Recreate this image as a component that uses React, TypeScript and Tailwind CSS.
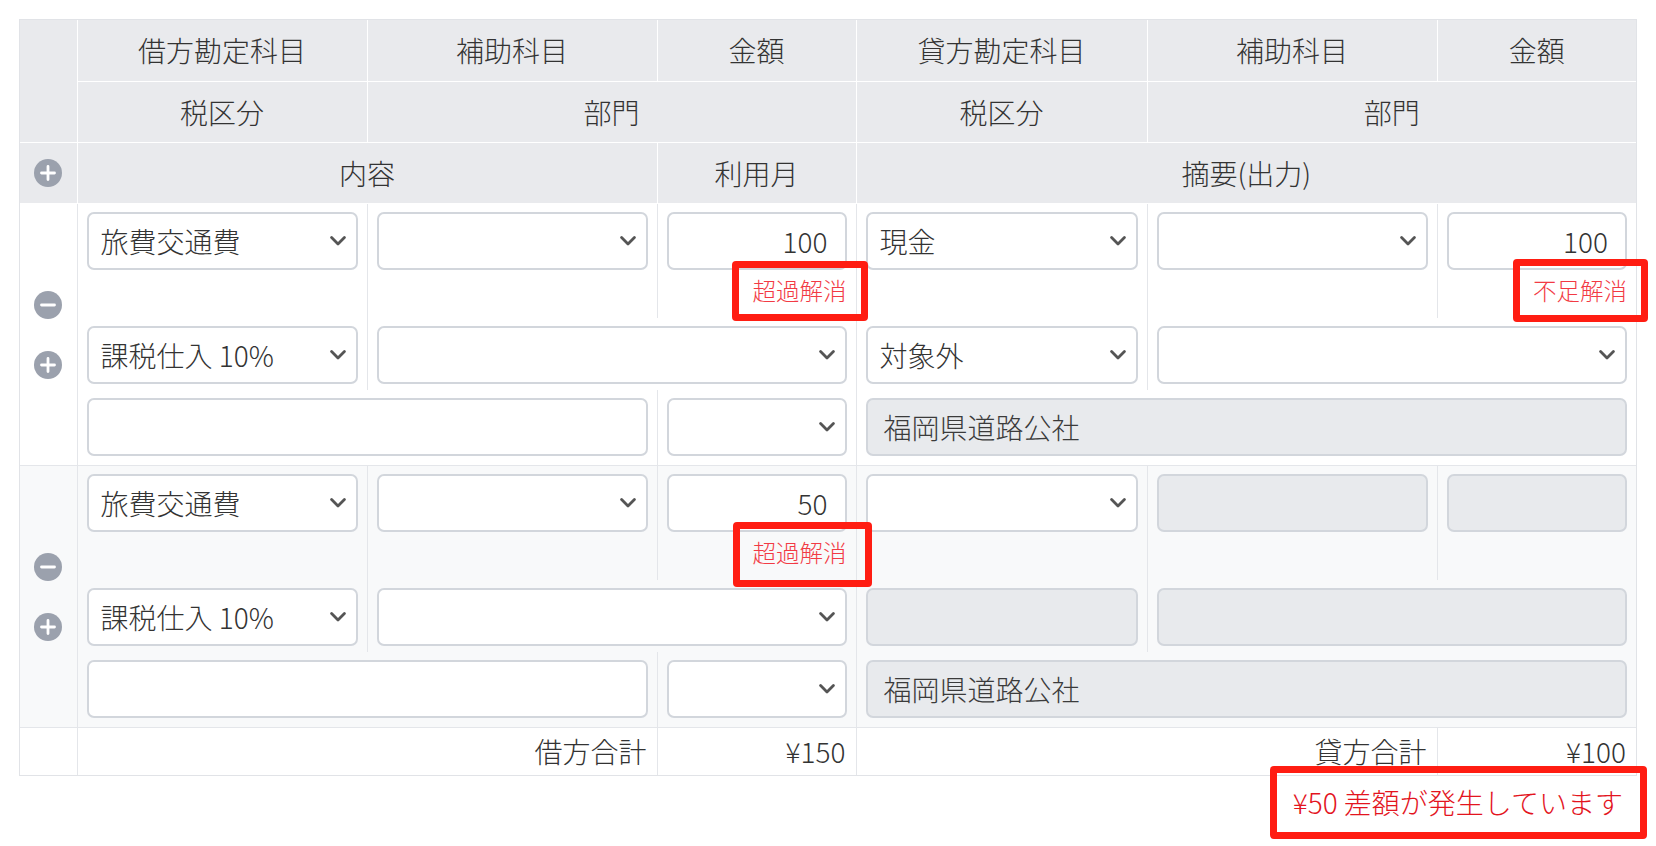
import React from 'react';

type Kind = 'select' | 'input' | 'disabled';

interface FieldProps {
  kind?: Kind;
  value?: string;
  align?: 'left' | 'right';
}

function Chevron() {
  return (
    <svg width="16" height="10" viewBox="0 0 16 10" className="shrink-0">
      <path d="M1.6 1.6 L8 8 L14.4 1.6" fill="none" stroke="#555" strokeWidth="2.8" strokeLinecap="round" strokeLinejoin="round" />
    </svg>
  );
}

function Field({ kind = 'select', value = '', align = 'left' }: FieldProps) {
  if (kind === 'disabled') {
    return (
      <div className="flex h-[58px] w-full items-center rounded-[7px] border-2 border-[#d2d6dc] bg-[#e8eaed] pl-[16px] text-[28px] leading-none text-[#3b3b3b]">
        {value}
      </div>
    );
  }
  if (kind === 'input') {
    return (
      <div
        className={
          align === 'right'
            ? 'flex h-[58px] w-full items-center justify-end rounded-[7px] border-2 border-[#d2d6dc] bg-white pr-[17px] text-[28px] leading-none text-[#333]'
            : 'flex h-[58px] w-full items-center rounded-[7px] border-2 border-[#d2d6dc] bg-white pl-[12px] text-[28px] leading-none text-[#333]'
        }
      >
        {value}
      </div>
    );
  }
  return (
    <div className="flex h-[58px] w-full items-center justify-between rounded-[7px] border-2 border-[#d2d6dc] bg-white pl-[12px] pr-[10px] text-[28px] leading-none text-[#333]">
      <span className="whitespace-nowrap">{value}</span>
      <Chevron />
    </div>
  );
}

function RoundIcon({ type }: { type: 'plus' | 'minus' }) {
  return (
    <span className="flex h-[28px] w-[28px] items-center justify-center rounded-full bg-[#9ba1ad]">
      <svg width="16" height="16" viewBox="0 0 16 16">
        <path d={type === 'plus' ? 'M8 1.5v13M1.5 8h13' : 'M1.5 8h13'} stroke="#fff" strokeWidth="2.8" strokeLinecap="round" />
      </svg>
    </span>
  );
}

// hand-drawn red annotation boxes from the screenshot
function Mark({ className }: { className: string }) {
  return <span className={'pointer-events-none absolute rounded-[4px] border-[7px] border-[#ff1d12] ' + className} />;
}

interface Entry {
  debit: string;
  debitAmount: string;
  debitNote: string;
  debitMark: string;
  credit: Kind;
  creditValue: string;
  creditSub: Kind;
  creditAmount: Kind;
  creditAmountValue: string;
  creditNote?: string;
  creditMark?: string;
  creditTax: Kind;
  creditTaxValue: string;
  creditDept: Kind;
  summary: string;
  striped: boolean;
}

const entries: Entry[] = [
  {
    debit: '旅費交通費',
    debitAmount: '100',
    debitNote: '超過解消',
    debitMark: 'left-[65px] -top-[12px] w-[136px] h-[60px]',
    credit: 'select',
    creditValue: '現金',
    creditSub: 'select',
    creditAmount: 'input',
    creditAmountValue: '100',
    creditNote: '不足解消',
    creditMark: 'left-[66px] -top-[14px] w-[135px] h-[63px]',
    creditTax: 'select',
    creditTaxValue: '対象外',
    creditDept: 'select',
    summary: '福岡県道路公社',
    striped: false,
  },
  {
    debit: '旅費交通費',
    debitAmount: '50',
    debitNote: '超過解消',
    debitMark: 'left-[66px] -top-[13px] w-[139px] h-[65px]',
    credit: 'select',
    creditValue: '',
    creditSub: 'disabled',
    creditAmount: 'disabled',
    creditAmountValue: '',
    creditTax: 'disabled',
    creditTaxValue: '',
    creditDept: 'disabled',
    summary: '福岡県道路公社',
    striped: true,
  },
];

const th = 'h-[61px] border border-white text-center align-middle text-[28px] font-light text-[#333]';
const rowA = 'border-x border-t border-[#e4e6ea] px-[9px] pt-[8px] pb-[11px] align-top';
const rowB = 'border-x border-[#e4e6ea] px-[9px] pt-[8px] pb-[6px] align-top';
const rowC = 'border-x border-b border-[#e4e6ea] px-[9px] pt-[8px] pb-[9px] align-top';
const note = 'relative mt-[3px] text-right text-[23.5px] leading-[34px] text-[#f23a44]';
const foot = 'h-[48px] border border-[#e4e6ea] pr-[10px] text-right align-middle text-[28px] text-[#333]';

function EntryRows({ e }: { e: Entry }) {
  const bg = e.striped ? 'bg-[#f8f9fa]' : 'bg-white';
  return (
    <>
      <tr className={bg}>
        <td rowSpan={3} className="border-x border-y border-[#e4e6ea] align-middle">
          <div className="flex flex-col items-center gap-[32px] pt-[2px]">
            <RoundIcon type="minus" />
            <RoundIcon type="plus" />
          </div>
        </td>
        <td className={rowA}>
          <Field value={e.debit} />
        </td>
        <td className={rowA}>
          <Field />
        </td>
        <td className={rowA}>
          <Field kind="input" align="right" value={e.debitAmount} />
          <div className={note}>
            {e.debitNote}
            <Mark className={e.debitMark} />
          </div>
        </td>
        <td className={rowA}>
          <Field kind={e.credit} value={e.creditValue} />
        </td>
        <td className={rowA}>
          <Field kind={e.creditSub} />
        </td>
        <td className={rowA}>
          <Field kind={e.creditAmount} align="right" value={e.creditAmountValue} />
          {e.creditNote && (
            <div className={note}>
              {e.creditNote}
              <Mark className={e.creditMark ?? ''} />
            </div>
          )}
        </td>
      </tr>
      <tr className={bg}>
        <td className={rowB}>
          <Field value="課税仕入 10%" />
        </td>
        <td colSpan={2} className={rowB}>
          <Field />
        </td>
        <td className={rowB}>
          <Field kind={e.creditTax} value={e.creditTaxValue} />
        </td>
        <td colSpan={2} className={rowB}>
          <Field kind={e.creditDept} />
        </td>
      </tr>
      <tr className={bg}>
        <td colSpan={2} className={rowC}>
          <Field kind="input" />
        </td>
        <td className={rowC}>
          <Field />
        </td>
        <td colSpan={3} className={rowC}>
          <Field kind="disabled" value={e.summary} />
        </td>
      </tr>
    </>
  );
}

export default function App() {
  return (
    <div className="min-h-screen bg-white px-[19px] pt-[19px] font-['Noto_Sans_CJK_JP','Noto_Sans',sans-serif] font-light">
      <div className="border border-[#e1e3e7]">
        <table className="w-full table-fixed border-collapse border-hidden">
          <colgroup>
            <col className="w-[57px]" />
            <col className="w-[290px]" />
            <col className="w-[290px]" />
            <col className="w-[199px]" />
            <col className="w-[291px]" />
            <col className="w-[290px]" />
            <col className="w-[199px]" />
          </colgroup>
          <thead className="bg-[#e9eaed]">
            <tr>
              <th rowSpan={2} className={th}></th>
              <th className={th}>借方勘定科目</th>
              <th className={th}>補助科目</th>
              <th className={th}>金額</th>
              <th className={th}>貸方勘定科目</th>
              <th className={th}>補助科目</th>
              <th className={th}>金額</th>
            </tr>
            <tr>
              <th className={th}>税区分</th>
              <th colSpan={2} className={th}>部門</th>
              <th className={th}>税区分</th>
              <th colSpan={2} className={th}>部門</th>
            </tr>
            <tr>
              <th className={th}>
                <div className="flex justify-center">
                  <RoundIcon type="plus" />
                </div>
              </th>
              <th colSpan={2} className={th}>内容</th>
              <th className={th}>利用月</th>
              <th colSpan={3} className={th}>摘要(出力)</th>
            </tr>
          </thead>
          <tbody>
            {entries.map((e, i) => (
              <EntryRows key={i} e={e} />
            ))}
            <tr className="bg-white">
              <td className={foot}></td>
              <td colSpan={2} className={foot}>借方合計</td>
              <td className={foot}>¥150</td>
              <td colSpan={2} className={foot}>貸方合計</td>
              <td className={foot}>¥100</td>
            </tr>
          </tbody>
        </table>
      </div>
      <div className="relative mt-[6px] pr-[14px] text-right text-[28px] leading-[40px] text-[#e3141e]">
        ¥50 差額が発生しています
        <Mark className="-right-[10px] -top-[16px] w-[377px] h-[73px]" />
      </div>
    </div>
  );
}
